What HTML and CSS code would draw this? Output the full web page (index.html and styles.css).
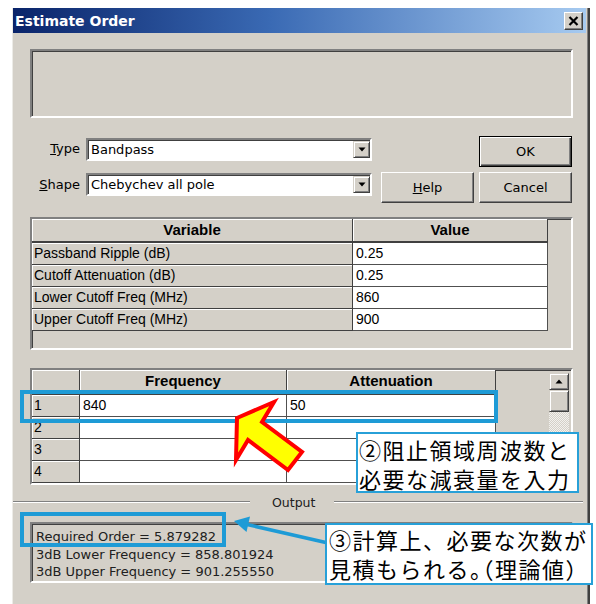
FILE: index.html
```html
<!DOCTYPE html>
<html lang="ja">
<head>
<meta charset="utf-8">
<title>Estimate Order</title>
<link rel="stylesheet" href="styles.css">
</head>
<body>
<div class="window">
  <div class="titlebar">
    <span class="title">Estimate Order</span>
    <span class="close">
      <svg width="13" height="12" viewBox="0 0 13 12"><path d="M2.5 2 L10.5 10 M10.5 2 L2.5 10" stroke="#000" stroke-width="2.2" fill="none"/></svg>
    </span>
  </div>

  <div class="content">
    <div class="message sunken"></div>

    <div class="row row-type">
      <span class="lbl"><u>T</u>ype</span>
      <div class="combo">
        <span class="combo-text">Bandpass</span>
        <span class="combo-btn"><svg width="8" height="5" viewBox="0 0 8 5"><polygon points="0.5,0.5 7.5,0.5 4,4.5" fill="#000"/></svg></span>
      </div>
      <span class="btn btn-default">OK</span>
    </div>

    <div class="row row-shape">
      <span class="lbl"><u>S</u>hape</span>
      <div class="combo">
        <span class="combo-text">Chebychev all pole</span>
        <span class="combo-btn"><svg width="8" height="5" viewBox="0 0 8 5"><polygon points="0.5,0.5 7.5,0.5 4,4.5" fill="#000"/></svg></span>
      </div>
      <span class="btn btn-help"><u>H</u>elp</span>
      <span class="btn btn-cancel">Cancel</span>
    </div>

    <div class="vbox sunken">
      <div class="vgrid">
        <div class="hcell">Variable</div><div class="hcell">Value</div>
        <div class="rcell">Passband Ripple (dB)</div><div class="dcell">0.25</div>
        <div class="rcell">Cutoff Attenuation (dB)</div><div class="dcell">0.25</div>
        <div class="rcell">Lower Cutoff Freq (MHz)</div><div class="dcell">860</div>
        <div class="rcell">Upper Cutoff Freq (MHz)</div><div class="dcell">900</div>
      </div>
    </div>

    <div class="fbox sunken">
      <div class="fgrid">
        <div class="hcell"></div><div class="hcell">Frequency</div><div class="hcell">Attenuation</div>
        <div class="rcell">1</div><div class="dcell">840</div><div class="dcell">50</div>
        <div class="rcell">2</div><div class="dcell"></div><div class="dcell"></div>
        <div class="rcell">3</div><div class="dcell"></div><div class="dcell"></div>
        <div class="rcell">4</div><div class="dcell"></div><div class="dcell"></div>
      </div>
      <div class="scrollbar">
        <span class="sb-btn"><svg width="8" height="5" viewBox="0 0 8 5"><polygon points="0.5,4.5 7.5,4.5 4,0.5" fill="#000"/></svg></span>
        <span class="sb-thumb"></span>
        <span class="sb-track"></span>
      </div>
    </div>

    <div class="group">
      <span class="gline gline-left"></span>
      <span class="glabel">Output</span>
      <span class="gline"></span>
    </div>

    <div class="output sunken">
      <div>Required Order = 5.879282</div>
      <div>3dB Lower Frequency = 858.801924</div>
      <div>3dB Upper Frequency = 901.255550</div>
    </div>
  </div>
</div>

<svg class="marks" width="596" height="604" viewBox="0 0 596 604">
  <rect x="22" y="392" width="474" height="29" fill="none" stroke="#1e9bd6" stroke-width="4"/>
  <rect x="22" y="514" width="202" height="31" fill="none" stroke="#1e9bd6" stroke-width="4"/>
  <line x1="328" y1="543" x2="247" y2="524.5" stroke="#1e9bd6" stroke-width="3.5"/>
  <polygon points="234,521 250,516.5 246.5,532" fill="#1e9bd6"/>
  <polygon points="237,418 274,402 262,422 302,452 288,470 248,440 236,460" fill="#ffff00" stroke="#ff0000" stroke-width="4" stroke-linejoin="miter"/>
</svg>

<div class="callout callout-input">②阻止領域周波数と<br>必要な減衰量を入力</div>
<div class="callout callout-output">③計算上、必要な次数が<br>見積もられる<span class="half">。（</span>理論値<span class="half">）</span></div>
</body>
</html>
```
FILE: styles.css
```css
* { box-sizing: border-box; }

html, body {
  margin: 0;
  padding: 0;
  overflow: hidden;
  background: #fff;
}

body {
  position: relative;
  width: 596px;
  height: 604px;
  font-family: "DejaVu Sans", sans-serif;
  font-size: 13px;
  color: #000;
}

/* dialog frame */
.window {
  margin: 8px 0 0 12px;
  width: 578px;
  height: 596px;
  background: #d4d0c8;
  border-left: 1px solid #ecebe7;
  border-right: 2px solid #404040;
  box-shadow: inset -1px 0 #808080;
  display: flex;
  flex-direction: column;
}

.titlebar {
  height: 25px;
  margin-right: 2px;
  padding-left: 2px;
  display: flex;
  align-items: center;
  background: linear-gradient(to right, #0a246a 0%, #3a6ab4 45%, #a6caf0 100%);
}

.title {
  color: #fff;
  font-weight: bold;
  font-size: 14px;
}

.close {
  margin-left: auto;
  margin-right: 3px;
  width: 19px;
  height: 18px;
  background: #d4d0c8;
  border: 1px solid;
  border-color: #fff #404040 #404040 #fff;
  box-shadow: inset -1px -1px #808080;
  display: flex;
  align-items: center;
  justify-content: center;
}

.content {
  padding: 0 15px 0 17px;
  display: flex;
  flex-direction: column;
}

/* 3D edges */
.sunken {
  border: 2px solid;
  border-color: #808080 #fff #fff #808080;
  box-shadow: inset 1px 1px #404040;
}

.raised {
  border: 1px solid;
  border-color: #fff #404040 #404040 #fff;
}

.message {
  margin-top: 16px;
  height: 69px;
}

/* Type / Shape rows */
.row {
  display: flex;
  align-items: flex-start;
  height: 31px;
}

.row-type { margin-top: 18px; }
.row-shape { margin-top: 5px; }

.lbl {
  width: 56px;
  padding-right: 6px;
  text-align: right;
  line-height: 23px;
  margin-top: 1px;
}

.combo {
  width: 286px;
  height: 23px;
  margin-top: 2px;
  display: flex;
  background: #fff;
  border: 2px solid;
  border-color: #808080 #fff #fff #808080;
  box-shadow: inset 1px 1px #404040;
}

.row-shape .combo { margin-top: 1px; }

.combo-text {
  flex: 1;
  padding-left: 3px;
  line-height: 19px;
}

.combo-btn {
  width: 17px;
  height: 17px;
  margin: 1px 0 0 0;
  background: #d4d0c8;
  border: 1px solid;
  border-color: #d4d0c8 #404040 #404040 #d4d0c8;
  box-shadow: inset 1px 1px #fff, inset -1px -1px #808080;
  display: flex;
  align-items: center;
  justify-content: center;
}

.btn {
  width: 93px;
  height: 31px;
  display: flex;
  align-items: center;
  justify-content: center;
  background: #d4d0c8;
  border: 1px solid;
  border-color: #fff #404040 #404040 #fff;
  box-shadow: inset -1px -1px #808080;
}

.btn-default {
  margin-left: auto;
  margin-right: 1px;
  border: 1px solid #000;
  box-shadow: inset 1px 1px #fff, inset -1px -1px #404040, inset -2px -2px #808080;
}

.btn-help { margin-left: 9px; }
.btn-cancel { margin-left: 5px; }

/* grids */
.vbox {
  margin-top: 14px;
  height: 133px;
  padding: 0;
}

.vgrid {
  display: grid;
  grid-template-columns: 321px 195px;
  grid-template-rows: 24px repeat(4, 22px);
  width: 516px;
  font-family: "Liberation Sans", Arial, sans-serif;
  font-size: 14px;
}

.fbox {
  margin-top: 18px;
  height: 117px;
  display: flex;
  justify-content: space-between;
  align-items: flex-start;
}

.fgrid {
  display: grid;
  grid-template-columns: 48px 207px 209px;
  grid-template-rows: 25px repeat(4, 22px);
  width: 464px;
  font-family: "Liberation Sans", Arial, sans-serif;
  font-size: 14px;
}

.hcell {
  background: #d4d0c8;
  border-right: 1px solid #404040;
  border-bottom: 2px solid #404040;
  box-shadow: inset 1px 1px #fff;
  font-weight: bold;
  font-size: 15px;
  text-align: center;
  line-height: 22px;
}

.rcell {
  background: #d4d0c8;
  border-right: 1px solid #404040;
  border-bottom: 1px solid #404040;
  box-shadow: inset 1px 1px #fff;
  padding-left: 2px;
  line-height: 21px;
  white-space: nowrap;
}

.dcell {
  background: #fff;
  border-right: 1px solid #505050;
  border-bottom: 1px solid #505050;
  padding-left: 3px;
  line-height: 21px;
}

.scrollbar {
  width: 20px;
  height: 110px;
  margin: 3px 2px 0 0;
  display: flex;
  flex-direction: column;
}

.sb-btn {
  height: 17px;
  background: #d4d0c8;
  border: 1px solid;
  border-color: #d4d0c8 #404040 #404040 #d4d0c8;
  box-shadow: inset 1px 1px #fff, inset -1px -1px #808080;
  display: flex;
  align-items: center;
  justify-content: center;
}

.sb-thumb {
  height: 22px;
  background: #d4d0c8;
  border: 1px solid;
  border-color: #d4d0c8 #404040 #404040 #d4d0c8;
  box-shadow: inset 1px 1px #fff, inset -1px -1px #808080;
}

.sb-track {
  flex: 1;
  background: repeating-conic-gradient(#f2f1ee 0 25%, #d4d0c8 0 50%) 0 0 / 2px 2px;
}

/* Output group */
.group {
  margin: 9px -10px 0 -17px;
  height: 16px;
  display: flex;
  align-items: center;
}

.gline {
  flex: 1;
  height: 2px;
  border-top: 1px solid #808080;
  border-bottom: 1px solid #fff;
}

.gline-left {
  flex: 0 0 237px;
}

.glabel {
  padding: 0 19px 0 22px;
  font-size: 12.5px;
  color: #202020;
}

.output {
  margin-top: 12px;
  height: 61px;
  padding: 4px 0 0 4px;
  font-size: 13px;
  line-height: 17.5px;
  color: #202020;
}

/* annotation layer */
.marks {
  position: absolute;
  left: 0;
  top: 0;
}

.callout {
  position: absolute;
  background: #fff;
  border: 2px solid #27a0d8;
  font-family: "Noto Sans CJK JP", sans-serif;
  font-size: 22px;
  line-height: 29px;
  letter-spacing: 1.5px;
  white-space: nowrap;
  color: #000;
}

.callout-input {
  left: 356px;
  top: 432px;
  width: 223px;
  height: 61px;
  padding: 1px 0 0 1px;
}

.callout-output {
  left: 325px;
  top: 523px;
  width: 268px;
  height: 62px;
  padding: 0 0 0 2px;
}

.half {
  font-feature-settings: "halt";
}
```
